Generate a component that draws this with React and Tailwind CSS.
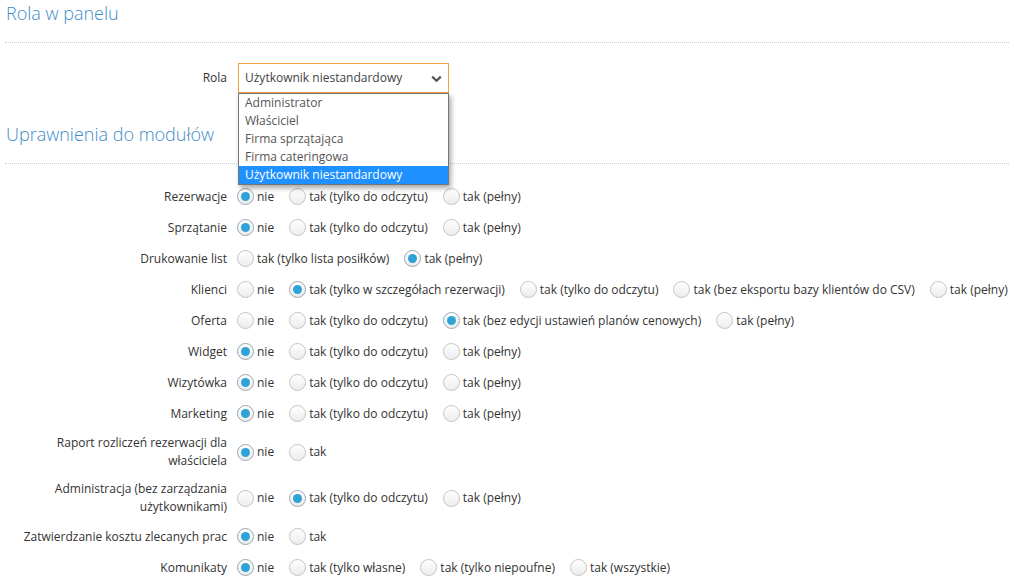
import React from "react";

const RO = "tak (tylko do odczytu)";
const FULL = "tak (pełny)";

const rows = [
  { label: "Rezerwacje", opts: ["nie", RO, FULL], sel: 0 },
  { label: "Sprzątanie", opts: ["nie", RO, FULL], sel: 0 },
  { label: "Drukowanie list", opts: ["tak (tylko lista posiłków)", FULL], sel: 1 },
  {
    label: "Klienci",
    opts: ["nie", "tak (tylko w szczegółach rezerwacji)", RO, "tak (bez eksportu bazy klientów do CSV)", FULL],
    sel: 1,
  },
  { label: "Oferta", opts: ["nie", RO, "tak (bez edycji ustawień planów cenowych)", FULL], sel: 2 },
  { label: "Widget", opts: ["nie", RO, FULL], sel: 0 },
  { label: "Wizytówka", opts: ["nie", RO, FULL], sel: 0 },
  { label: "Marketing", opts: ["nie", RO, FULL], sel: 0 },
  { label: "Raport rozliczeń rezerwacji dla właściciela", opts: ["nie", "tak"], sel: 0 },
  { label: "Administracja (bez zarządzania użytkownikami)", opts: ["nie", RO, FULL], sel: 1 },
  { label: "Zatwierdzanie kosztu zlecanych prac", opts: ["nie", "tak"], sel: 0 },
  { label: "Komunikaty", opts: ["nie", "tak (tylko własne)", "tak (tylko niepoufne)", "tak (wszystkie)"], sel: 0 },
];

function Radio({ checked }) {
  return (
    <span
      className={
        "flex items-center justify-center w-[17px] h-[17px] rounded-full border shrink-0 bg-gradient-to-b from-white to-[#ececec] " +
        (checked ? "border-[#9aa6b0]" : "border-[#c4c4c4]")
      }
    >
      {checked && <span className="block w-[9px] h-[9px] rounded-full bg-[#2fa3d8]" />}
    </span>
  );
}

function Row({ label, opts, sel }) {
  return (
    <div className="flex items-center min-h-[21px] mb-[10px]">
      <div className="w-[212px] ml-[10px] text-right leading-[18px] text-[#333] shrink-0">{label}</div>
      <div className="flex items-center ml-[10px] gap-[15px] whitespace-nowrap">
        {opts.map((o, i) => (
          <div key={i} className="flex items-center gap-[3px]">
            <Radio checked={i === sel} />
            <span className="leading-[18px] text-[#333]">{o}</span>
          </div>
        ))}
      </div>
    </div>
  );
}

export default function App() {
  const items = ["Administrator", "Właściciel", "Firma sprzątająca", "Firma cateringowa", "Użytkownik niestandardowy"];
  return (
    <div
      className="w-[1014px] h-[583px] overflow-hidden bg-white text-[12px] px-[5px]"
      style={{ fontFamily: '"Open Sans", "Noto Sans", sans-serif' }}
    >
      <h2 className="text-[18px] font-light leading-[26px] text-[#3d8bc9] pl-[1px]">Rola w panelu</h2>
      <div className="mt-[16px] border-t border-dotted border-[#cfcfcf]" />

      <div className="flex items-center mt-[20px]">
        <div className="w-[212px] ml-[10px] text-right text-[#333]">Rola</div>
        <div className="relative ml-[11px]">
          <div className="flex items-center justify-between w-[211px] h-[30px] border border-[#f0a24a] bg-white pl-[6px] pr-[6px] text-[#444]">
            <span>Użytkownik niestandardowy</span>
            <svg width="11" height="8" viewBox="0 0 11 8" className="mt-[1px]">
              <path d="M1.2 1.6 L5.5 5.8 L9.8 1.6" fill="none" stroke="#555" strokeWidth="2.2" />
            </svg>
          </div>
          <div className="absolute left-0 top-[30px] w-[211px] border border-[#767676] bg-white shadow-[2px_3px_5px_rgba(0,0,0,0.35)] z-10">
            {items.map((it, i) => (
              <div
                key={i}
                className={
                  "h-[18px] leading-[18px] pl-[6px] " +
                  (i === 4 ? "bg-[#1e90ff] text-white" : "text-[#555]")
                }
              >
                {it}
              </div>
            ))}
          </div>
        </div>
      </div>

      <h2 className="mt-[28px] text-[18px] font-light leading-[26px] text-[#3d8bc9] pl-[1px]">Uprawnienia do modułów</h2>
      <div className="mt-[16px] border-t border-dotted border-[#cfcfcf]" />

      <div className="mt-[22px]">
        {rows.map((r, i) => (
          <Row key={i} {...r} />
        ))}
      </div>
    </div>
  );
}
